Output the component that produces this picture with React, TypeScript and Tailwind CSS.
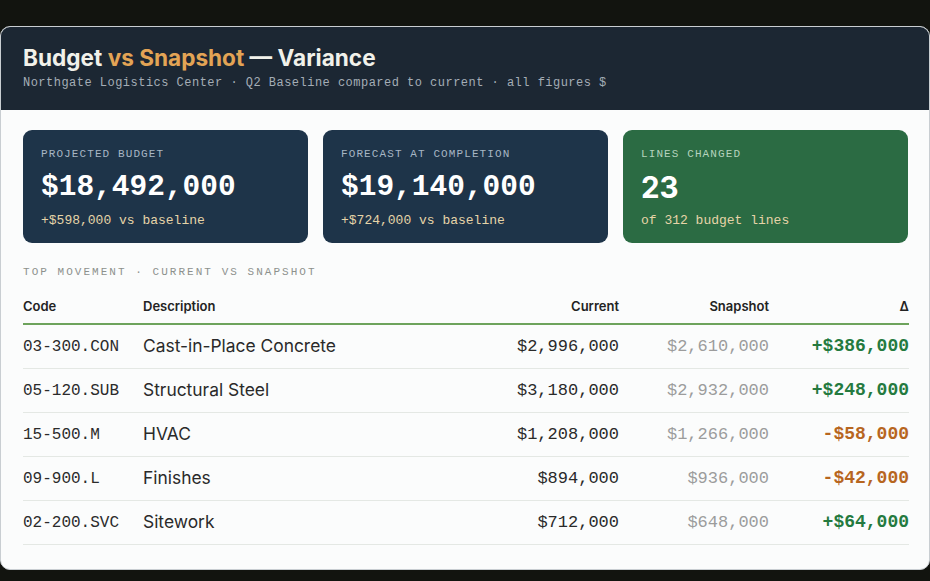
import React from 'react';

const mono = '[font-family:"Liberation_Mono",monospace]';

const cards = [
  { label: 'PROJECTED BUDGET', value: '$18,492,000', note: '+$598,000 vs baseline', tone: 'blue' as const },
  { label: 'FORECAST AT COMPLETION', value: '$19,140,000', note: '+$724,000 vs baseline', tone: 'blue' as const },
  { label: 'LINES CHANGED', value: '23', note: 'of 312 budget lines', tone: 'green' as const },
];

const rows = [
  { code: '03-300.CON', desc: 'Cast-in-Place Concrete', current: '$2,996,000', snap: '$2,610,000', delta: '+$386,000', up: true },
  { code: '05-120.SUB', desc: 'Structural Steel', current: '$3,180,000', snap: '$2,932,000', delta: '+$248,000', up: true },
  { code: '15-500.M', desc: 'HVAC', current: '$1,208,000', snap: '$1,266,000', delta: '-$58,000', up: false },
  { code: '09-900.L', desc: 'Finishes', current: '$894,000', snap: '$936,000', delta: '-$42,000', up: false },
  { code: '02-200.SVC', desc: 'Sitework', current: '$712,000', snap: '$648,000', delta: '+$64,000', up: true },
];

function StatCard({ label, value, note, tone }: (typeof cards)[number]) {
  const green = tone === 'green';
  return (
    <div className={`h-[113px] rounded-[9px] px-[18px] pt-[17px] ${green ? 'bg-[#2b6b43]' : 'bg-[#1e3449]'}`}>
      <div className={`${mono} text-[11px] leading-[14px] tracking-[0.1em] ${green ? 'text-[#b5d3bd]' : 'text-[#a7b6c4]'}`}>
        {label}
      </div>
      <div
        className={`mt-[9px] text-[29.5px] leading-[34px] font-bold text-white ${
          green ? '[font-family:Inter,sans-serif]' : mono
        }`}
      >
        {value}
      </div>
      <div className={`${mono} mt-[9px] text-[13px] leading-[16px] text-[#e6d4a8]`}>{note}</div>
    </div>
  );
}

export default function App() {
  return (
    <div className="min-h-[581px] bg-[#12140f] pt-[26px] [font-family:Inter,sans-serif]">
      <div className="overflow-hidden rounded-[10px] border border-[#c9ced2] bg-[#fbfcfc]">
        <div className="h-[83px] bg-[#1c2733] px-[22px] pt-[17px]">
          <h1 className="text-[22.6px] leading-[28px] font-bold text-[#f1f1ea]">
            Budget <span className="text-[#e3a455]">vs Snapshot</span> — Variance
          </h1>
          <p className={`${mono} mt-[3px] text-[12px] leading-[16px] tracking-[0.04em] text-[#a4adb6]`}>
            Northgate Logistics Center · Q2 Baseline compared to current · all figures $
          </p>
        </div>

        <div className="pl-[22px] pr-[20px] pt-[20px] pb-[24px]">
          <div className="mr-[1px] grid grid-cols-3 gap-[15px]">
            {cards.map((c) => (
              <StatCard key={c.label} {...c} />
            ))}
          </div>

          <div className={`${mono} mt-[22px] text-[11px] leading-[14px] tracking-[0.185em] text-[#8d918d]`}>
            TOP MOVEMENT · CURRENT VS SNAPSHOT
          </div>

          <div className="mt-[11px]">
            <div className="grid h-[35px] grid-cols-[120px_1fr_150px_150px_140px] items-end border-b-2 border-[#6da35c] pb-[8px] text-[13px] leading-[18px] font-semibold text-[#232323]">
              <div>Code</div>
              <div>Description</div>
              <div className="text-right">Current</div>
              <div className="text-right">Snapshot</div>
              <div className="text-right">Δ</div>
            </div>
            {rows.map((r) => (
              <div
                key={r.code}
                className="grid h-[44px] grid-cols-[120px_1fr_150px_150px_140px] items-center border-b border-[#e4e8e4]"
              >
                <div className={`${mono} text-[16px] text-[#2b2b2b]`}>{r.code}</div>
                <div className="text-[17.4px] text-[#2a2a2a]">{r.desc}</div>
                <div className={`${mono} text-right text-[17px] text-[#2a2a2a]`}>{r.current}</div>
                <div className={`${mono} text-right text-[17px] text-[#9c9c9c]`}>{r.snap}</div>
                <div
                  className={`${mono} text-right text-[18px] font-bold ${
                    r.up ? 'text-[#247a3f]' : 'text-[#b7661f]'
                  }`}
                >
                  {r.delta}
                </div>
              </div>
            ))}
          </div>
        </div>
      </div>
    </div>
  );
}
